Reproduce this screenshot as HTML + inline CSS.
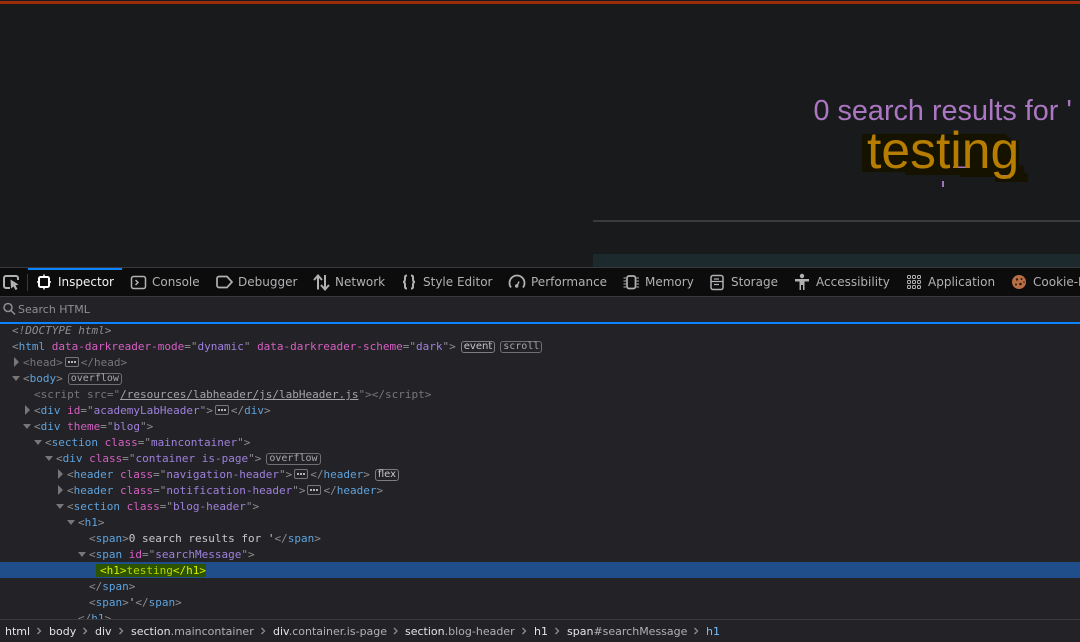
<!DOCTYPE html>
<html><head><meta charset="utf-8"><style>
*{box-sizing:border-box}
html,body{margin:0;padding:0;width:1080px;height:642px;overflow:hidden;background:#181a1b}
.a{position:absolute}
.page{position:absolute;left:0;top:0;width:1080px;height:267px;background:#181a1b;overflow:hidden;font-family:"Liberation Sans",sans-serif}
.tb{position:absolute;left:0;top:267px;width:1080px;height:30px;background:#0c0c0d;border-top:1px solid #38383d;border-bottom:1px solid #38383d}
.t{position:absolute;top:282px;transform:translateY(-50%);font:12px/16px "DejaVu Sans",sans-serif;color:#b1b1b3;white-space:nowrap}
svg{position:absolute;overflow:visible}
.s{position:absolute;left:0;top:297px;width:1080px;height:25px;background:#232327}
.bl{position:absolute;left:0;top:322px;width:1080px;height:2px;background:#0a84ff}
.m{position:absolute;left:0;top:324px;width:1080px;height:295px;background:#232327;overflow:hidden}
.l{position:absolute;white-space:pre;font:11px/16px "DejaVu Sans Mono",monospace;color:#8e8e91;margin-top:1px}
.n{color:#5fa2dc}.k{color:#d65fc2}.v{color:#9f80dc}.x{color:#c9c9cb}.d{color:#77777a}
.b{display:inline-block;vertical-align:1px;height:12px;border:1px solid #6f6f72;border-radius:3px;font:10px/10px "DejaVu Sans Mono",monospace;padding:0 2px;margin-left:5px;color:#a8a8ab}
.b.f{font-family:"DejaVu Sans",sans-serif;color:#c8c8ca;border-color:#7d7d80}
.e{display:inline-block;vertical-align:0;width:14px;height:10px;border:1px solid #77777a;border-radius:2px;margin:0 2px;position:relative;top:1px}
.e:after{content:"";position:absolute;left:2px;top:3px;width:2px;height:2px;background:#b5b5b7;box-shadow:3px 0 #b5b5b7,6px 0 #b5b5b7}
.r{position:absolute;width:0;height:0;border-top:5px solid transparent;border-bottom:5px solid transparent;border-left:5px solid #77777a}
.o{position:absolute;width:0;height:0;margin-left:1px;border-left:4.500px solid transparent;border-right:4.500px solid transparent;border-top:5px solid #77777a}
.c{position:absolute;left:0;top:619px;width:1080px;height:23px;background:#232327;border-top:1px solid #38383d}
.w{position:absolute;top:624px;font:11px/16px "DejaVu Sans",sans-serif;color:#b1b1b3;white-space:nowrap}
.w b{font-weight:normal;color:#e4e4e6}
</style></head><body>
<div class="page">
<div class="a" style="left:0;top:1px;width:1080px;height:3px;background:#9a2c0a"></div>
<div class="a" style="left:593px;top:220px;width:487px;height:2px;background:#383b3d"></div>
<div class="a" style="left:593px;top:254px;width:487px;height:13px;background:#1c2a2e"></div>
<svg style="left:0;top:0" width="1080" height="267"><path d="M862 134H1005L1012 140H1019V165L1024 166V172L1028 174V182H995V177H960V175H905V172H862Z" fill="#151300"/><path d="M997 175h16l-3 3.500h-10zM953 166.500h17v1.500h-17z" fill="#a771bd"/></svg>
<div class="a" style="left:813.500px;top:92.500px;font-size:28.800px;line-height:36px;color:#ab76c2;white-space:nowrap">0 search results for '</div>
<div class="a" style="left:867px;top:120px;font-size:51.700px;line-height:60px;color:#b77d00;white-space:nowrap">testing</div>
<div class="a" style="left:942px;top:181px;width:2px;height:6px;background:#a771bd"></div>
</div>
<div class="tb"></div>
<div class="a" style="left:28px;top:268px;width:94px;height:2px;background:#0a84ff"></div>
<div class="a" style="left:27px;top:274px;width:1px;height:17px;background:#38383d"></div>
<svg style="left:0;top:268px" width="1080" height="28" fill="none" stroke="#b1b1b3" stroke-width="1.500">
<path d="M10 20H6a2 2 0 0 1-2-2V10a2 2 0 0 1 2-2h10a2 2 0 0 1 2 2v2" stroke-width="2"/><path d="M10.500 11.500l8 5-3 1 2 3.500-2 1-2-3.500-2.500 2z" fill="#b1b1b3" stroke="none"/>
<rect x="39" y="9" width="10" height="10" rx="1.500" stroke="#fff" stroke-width="2"/><path d="M44 6.500v2M44 19.500v2M37 14h1.500M49.500 14h1.500" stroke="#fff"/>
<rect x="131.500" y="8.500" width="14" height="12" rx="2"/><path d="M135.500 12l2.500 2.500-2.500 2.500"/>
<path d="M219 8.500h8l5 5.500-5 5.500h-8a2 2 0 0 1-2-2v-7a2 2 0 0 1 2-2z" stroke-width="1.700"/>
<path d="M318 21.500V8M314 12l4-4.500 4 4.500M325 7v14M321 17l4 4.500 4-4.500" stroke-width="2"/>
<path d="M407 7.500c-2.500 0-2 1.500-2 3.500s-.5 3-2 3c1.500 0 2 1 2 3s-.5 3.500 2 3.500M411 7.500c2.500 0 2 1.500 2 3.500s.5 3 2 3c-1.500 0-2 1-2 3s.5 3.500-2 3.500" stroke-width="2"/>
<path d="M511 19.500a7.500 7.500 0 1 1 12 0" stroke-width="1.800"/><circle cx="516.700" cy="18" r="1.700" fill="#b1b1b3" stroke="none"/><path d="M517 18l2-4.500"/>
<rect x="627" y="8" width="8.500" height="12.500" rx="2" stroke-width="1.700"/><path d="M623.500 10h2.500M623.500 13h2.500M623.500 16h2.500M623.500 19h2.500M636.500 10h2.500M636.500 13h2.500M636.500 16h2.500M636.500 19h2.500" stroke-width="1"/>
<rect x="711" y="7.500" width="12" height="14" rx="2" stroke-width="1.500"/><path d="M711 13.500h12M714 11h5M714 16.500h5" stroke-width="1.200"/>
<circle cx="802" cy="8" r="2.200" fill="#b1b1b3" stroke="none"/><path d="M795 11h14v2.500h-4.500V22H803v-5h-2v5h-1.500v-8.500H795z" fill="#b1b1b3" stroke="none"/>
<g stroke-width="1"><rect x="907.500" y="7.500" width="3" height="3" rx="1"/><rect x="912.500" y="7.500" width="3" height="3" rx="1"/><rect x="917.500" y="7.500" width="3" height="3" rx="1"/><rect x="907.500" y="12.500" width="3" height="3" rx="1"/><rect x="912.500" y="12.500" width="3" height="3" rx="1"/><rect x="917.500" y="12.500" width="3" height="3" rx="1"/><rect x="907.500" y="17.500" width="3" height="3" rx="1"/><rect x="912.500" y="17.500" width="3" height="3" rx="1"/><rect x="917.500" y="17.500" width="3" height="3" rx="1"/></g>
<circle cx="1019" cy="14" r="7" fill="#b86f45" stroke="none"/><g fill="#2e1c10" stroke="none"><circle cx="1017" cy="11.500" r="1.200"/><circle cx="1021.500" cy="11" r="1"/><circle cx="1016" cy="16.500" r="1"/><circle cx="1020.500" cy="16" r="1.300"/><circle cx="1024" cy="14" r=".8"/></g>
</svg>
<div class="t" style="left:58px;color:#f4f4f5">Inspector</div>
<div class="t" style="left:152px">Console</div>
<div class="t" style="left:238px">Debugger</div>
<div class="t" style="left:335px">Network</div>
<div class="t" style="left:423px">Style Editor</div>
<div class="t" style="left:531px">Performance</div>
<div class="t" style="left:645px">Memory</div>
<div class="t" style="left:731px">Storage</div>
<div class="t" style="left:816px">Accessibility</div>
<div class="t" style="left:928px">Application</div>
<div class="t" style="left:1033px">Cookie-Editor</div>
<div class="s"></div>
<svg style="left:0;top:297px" width="20" height="25" fill="none" stroke="#8f8f92" stroke-width="1.500"><circle cx="8" cy="10.500" r="4"/><path d="M11 13.500l4 4"/></svg>
<div class="a" style="left:18px;top:302px;font:11px/16px 'DejaVu Sans',sans-serif;color:#8f8f92;white-space:nowrap">Search HTML</div>
<div class="bl"></div>
<div class="m">
<div class="a" style="left:0;top:238px;width:1080px;height:16px;background:#204e8a"></div>
<div class="a" style="left:96px;top:240px;width:110px;height:13px;background:#2c5300"></div>
<div class="l" style="left:12px;top:-2px;font-style:italic">&lt;!DOCTYPE html&gt;</div>
<div class="l" style="left:12px;top:14px">&lt;<span class="n">html</span> <span class="k">data-darkreader-mode</span>="<span class="v">dynamic</span>" <span class="k">data-darkreader-scheme</span>="<span class="v">dark</span>"&gt;<span class="b f">event</span><span class="b">scroll</span></div>
<div class="r" style="left:14px;top:33px"></div>
<div class="l d" style="left:23px;top:30px">&lt;head&gt;<span class="e"></span>&lt;/head&gt;</div>
<div class="o" style="left:11px;top:52px"></div>
<div class="l" style="left:23px;top:46px">&lt;<span class="n">body</span>&gt;<span class="b">overflow</span></div>
<div class="l d" style="left:34px;top:62px">&lt;script src="<span style="text-decoration:underline;color:#a5a5a8">/resources/labheader/js/labHeader.js</span>"&gt;&lt;/script&gt;</div>
<div class="r" style="left:25px;top:81px"></div>
<div class="l" style="left:34px;top:78px">&lt;<span class="n">div</span> <span class="k">id</span>="<span class="v">academyLabHeader</span>"&gt;<span class="e"></span>&lt;/<span class="n">div</span>&gt;</div>
<div class="o" style="left:22px;top:100px"></div>
<div class="l" style="left:34px;top:94px">&lt;<span class="n">div</span> <span class="k">theme</span>="<span class="v">blog</span>"&gt;</div>
<div class="o" style="left:33px;top:116px"></div>
<div class="l" style="left:45px;top:110px">&lt;<span class="n">section</span> <span class="k">class</span>="<span class="v">maincontainer</span>"&gt;</div>
<div class="o" style="left:44px;top:132px"></div>
<div class="l" style="left:56px;top:126px">&lt;<span class="n">div</span> <span class="k">class</span>="<span class="v">container is-page</span>"&gt;<span class="b">overflow</span></div>
<div class="r" style="left:58px;top:145px"></div>
<div class="l" style="left:67px;top:142px">&lt;<span class="n">header</span> <span class="k">class</span>="<span class="v">navigation-header</span>"&gt;<span class="e"></span>&lt;/<span class="n">header</span>&gt;<span class="b f">flex</span></div>
<div class="r" style="left:58px;top:161px"></div>
<div class="l" style="left:67px;top:158px">&lt;<span class="n">header</span> <span class="k">class</span>="<span class="v">notification-header</span>"&gt;<span class="e"></span>&lt;/<span class="n">header</span>&gt;</div>
<div class="o" style="left:55px;top:180px"></div>
<div class="l" style="left:67px;top:174px">&lt;<span class="n">section</span> <span class="k">class</span>="<span class="v">blog-header</span>"&gt;</div>
<div class="o" style="left:66px;top:196px"></div>
<div class="l" style="left:78px;top:190px">&lt;<span class="n">h1</span>&gt;</div>
<div class="l" style="left:89px;top:206px">&lt;<span class="n">span</span>&gt;<span class="x">0 search results for '</span>&lt;/<span class="n">span</span>&gt;</div>
<div class="o" style="left:77px;top:228px"></div>
<div class="l" style="left:89px;top:222px">&lt;<span class="n">span</span> <span class="k">id</span>="<span class="v">searchMessage</span>"&gt;</div>
<div class="l" style="left:100px;top:238px;color:#dcee00">&lt;h1&gt;<span style="color:#b9d400">testing</span>&lt;/h1&gt;</div>
<div class="l" style="left:89px;top:254px">&lt;/<span class="n">span</span>&gt;</div>
<div class="l" style="left:89px;top:270px">&lt;<span class="n">span</span>&gt;<span class="x">'</span>&lt;/<span class="n">span</span>&gt;</div>
<div class="l" style="left:78px;top:286px">&lt;/<span class="n">h1</span>&gt;</div>
</div>
<div class="c"></div>
<div class="w" style="left:5px"><b>html</b></div>
<div class="w" style="left:49px"><b>body</b></div>
<div class="w" style="left:95px"><b>div</b></div>
<div class="w" style="left:131px"><b>section</b>.maincontainer</div>
<div class="w" style="left:273px"><b>div</b>.container.is-page</div>
<div class="w" style="left:405px"><b>section</b>.blog-header</div>
<div class="w" style="left:534px"><b>h1</b></div>
<div class="w" style="left:567px"><b>span</b>#searchMessage</div>
<div class="w" style="left:706px;color:#75bfff">h1</div>
<svg style="left:0;top:619px" width="720" height="23" fill="none" stroke="#8d8d96" stroke-width="1.300"><path d="M37.500 9l3 3-3 3M83.500 9l3 3-3 3M119.500 9l3 3-3 3M261.500 9l3 3-3 3M394 9l3 3-3 3M522.500 9l3 3-3 3M555.500 9l3 3-3 3M694.500 9l3 3-3 3"/></svg>
</body></html>
